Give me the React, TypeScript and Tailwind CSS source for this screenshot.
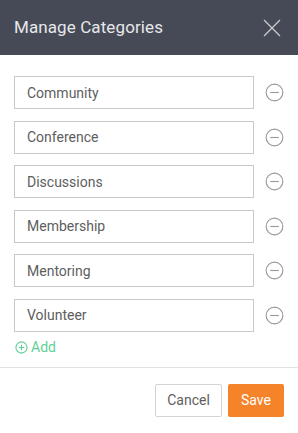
import { useState } from 'react';

const initial = ['Community', 'Conference', 'Discussions', 'Membership', 'Mentoring', 'Volunteer'];

function MinusCircle() {
  return (
    <svg width="19" height="19" viewBox="0 0 20 20" fill="none" stroke="#9a9a9a" strokeWidth="1.2">
      <circle cx="10" cy="10" r="8.8" />
      <line x1="5.5" y1="10" x2="14.5" y2="10" />
    </svg>
  );
}

function PlusCircle() {
  return (
    <svg width="13" height="13" viewBox="0 0 14 14" fill="none" stroke="#5fcf98" strokeWidth="1.2">
      <circle cx="7" cy="7" r="6" />
      <line x1="4" y1="7" x2="10" y2="7" />
      <line x1="7" y1="4" x2="7" y2="10" />
    </svg>
  );
}

export default function App() {
  const [items, setItems] = useState(initial);

  return (
    <div className="w-[298px] h-[433px] bg-white flex flex-col" style={{ fontFamily: 'Roboto, "Liberation Sans", sans-serif' }}>
      <div className="h-[55px] bg-[#464a56] flex items-center justify-between pl-[14px] pr-[17px]">
        <span className="text-[17px] text-[#e6e7ea] tracking-[0.1px]">Manage Categories</span>
        <svg width="18" height="18" viewBox="0 0 18 18" stroke="#c9cbd0" strokeWidth="1.3">
          <line x1="1" y1="1" x2="17" y2="17" />
          <line x1="17" y1="1" x2="1" y2="17" />
        </svg>
      </div>

      <div className="flex flex-col pt-[21px] px-[14px] pb-[9px] border-b border-[#e2e2e2]">
        <div className="flex flex-col gap-[11.5px]">
          {items.map((item, i) => (
            <div key={i} className="flex items-center">
              <input
                value={item}
                onChange={(e) => setItems(items.map((v, j) => (j === i ? e.target.value : v)))}
                className="w-[240px] h-[33px] border border-[#c9c9c9] px-[12px] text-[14px] text-[#5e5e5e] outline-none"
              />
              <button className="ml-[11px] flex" onClick={() => setItems(items.filter((_, j) => j !== i))}>
                <MinusCircle />
              </button>
            </div>
          ))}
        </div>
        <button className="mt-[5px] flex items-center gap-[3px] text-[14px] text-[#5fcf98] self-start pl-[1px]">
          <PlusCircle />
          <span>Add</span>
        </button>
      </div>

      <div className="flex justify-end gap-[6px] pt-[16px] pr-[14px]">
        <button className="w-[67px] h-[33px] border border-[#d4d4d4] rounded-[2px] text-[14px] text-[#5e5e5e]">Cancel</button>
        <button className="w-[56px] h-[33px] bg-[#f5832a] rounded-[2px] text-[14px] text-white">Save</button>
      </div>
    </div>
  );
}
